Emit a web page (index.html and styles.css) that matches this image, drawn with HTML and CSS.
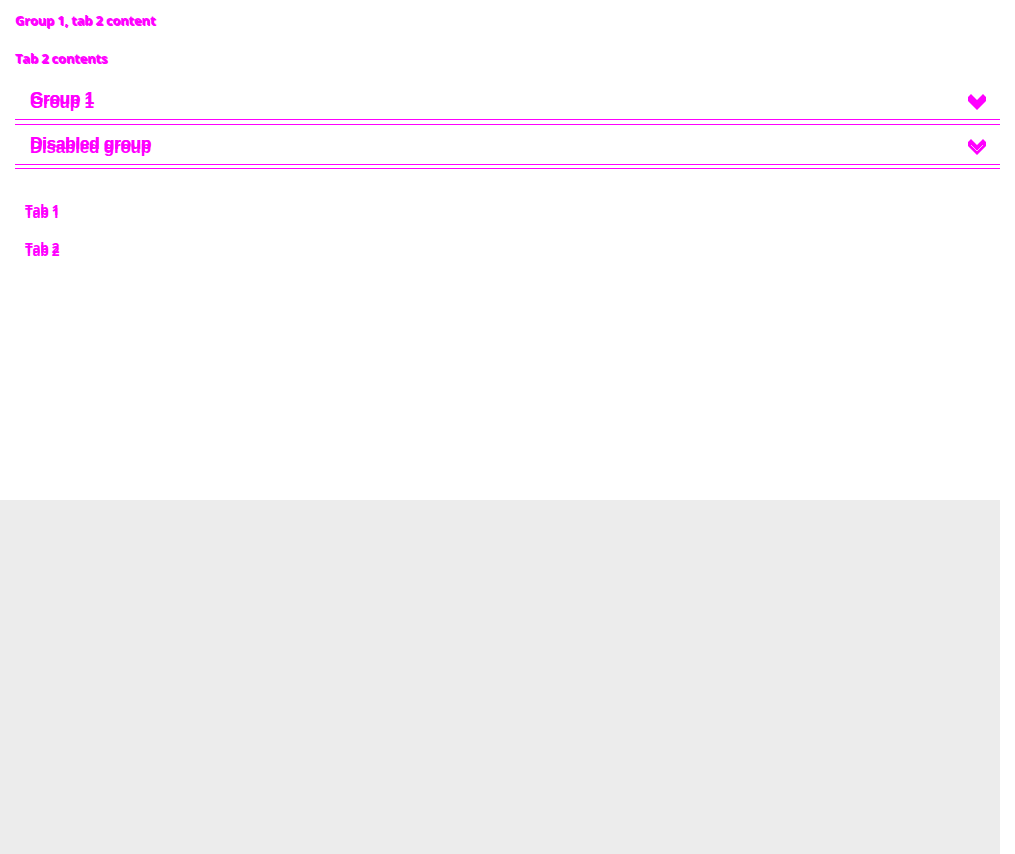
FILE: index.html
```html
<!DOCTYPE html>
<html>
<head>
<meta charset="utf-8">
<link rel="stylesheet" href="styles.css">
</head>
<body>
<div class="page">
  <div class="main">
    <p class="small">Group 1, tab 2 content</p>
    <p class="small second">Tab 2 contents</p>
    <div class="accordion">
      <div class="item">
        <div class="head"><span class="title">Group 1</span>
          <svg class="chev" width="18" height="16" viewBox="0 0 18 16"><path d="M0 3 L3 0 L9 6 L15 0 L18 3 L18 7 L9 16 L0 7 Z" fill="#ff00ff"/></svg>
        </div>
      </div>
      <div class="item">
        <div class="head"><span class="title">Disabled group</span>
          <svg class="chev" width="18" height="16" viewBox="0 0 18 16"><path d="M0 3 L3 0 L9 6 L15 0 L18 3 L18 7 L9 16 L0 7 Z" fill="#ff00ff"/><path d="M3 6 L9 12 L15 6" stroke="#ffb0ff" stroke-width="1" fill="none"/></svg>
        </div>
      </div>
    </div>
    <div class="tabs">
      <div class="tab">Tab 1</div>
      <div class="tab">Tab 2</div>
    </div>
  </div>
  <div class="footer"></div>
</div>
</body>
</html>
```
FILE: styles.css
```css
html, body { margin: 0; padding: 0; background: #fff; }
body { font-family: "Open Sans", "Liberation Sans", sans-serif; color: #ff00ff; font-weight: 700; }
.page { width: 1000px; }
.main { height: 500px; padding: 0 0 0 15px; box-sizing: border-box; overflow: hidden; }
.small { margin: 0; font-size: 13px; line-height: 18px; letter-spacing: -0.2px; text-shadow: 1px 1px 0 #ff00ff; }
.small:first-child { padding-top: 11px; }
.second { margin-top: 20px; }
.accordion { margin-top: 13px; }
.item { border-bottom: 1px solid #ff00ff; padding-bottom: 4px; }
.item + .item { padding-bottom: 3px; }
.head { height: 39px; border-bottom: 1px solid #ff00ff; display: flex; align-items: center; justify-content: space-between; padding: 0 15px; }
.title { font-family: "Liberation Sans", sans-serif; font-size: 17px; letter-spacing: -0.2px; text-shadow: 0 4px 0 #ff00ff, 0.5px 0 0 #ff00ff; position: relative; top: -1px; }
.chev { position: relative; top: 2px; margin-right: -1px; }
.tabs { padding: 32px 0 0 10px; display: flex; flex-direction: column; gap: 20px; }
.tab { font-size: 13.5px; line-height: 18px; letter-spacing: -0.3px; text-shadow: 0 3px 0 #ff00ff; }
.footer { height: 354px; background: #ececec; }
```
